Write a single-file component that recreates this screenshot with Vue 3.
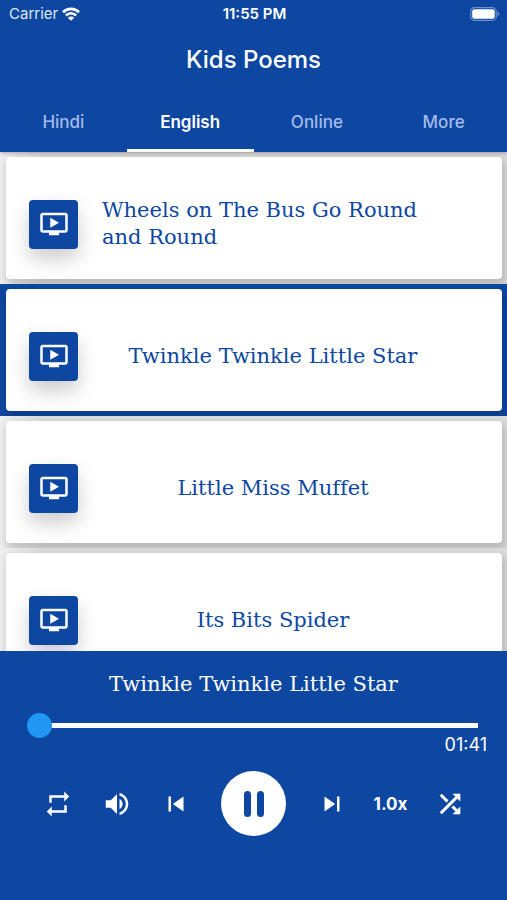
<script setup>
import { ref } from 'vue'

const tabs = ['Hindi', 'English', 'Online', 'More']
const activeTab = ref('English')

const poems = [
  'Wheels on The Bus Go Round and Round',
  'Twinkle Twinkle Little Star',
  'Little Miss Muffet',
  'Its Bits Spider',
]
const current = ref('Twinkle Twinkle Little Star')
const position = ref(0)
</script>

<template>
  <div class="app">
    <header class="header">
      <div class="status">
        <div class="carrier">
          <span>Carrier</span>
          <svg class="wifi" viewBox="0 0 18 14" aria-hidden="true">
            <g fill="none" stroke="currentColor" stroke-width="2.700">
              <path d="M1 5.200C5.500.7 12.500.7 17 5.200" />
              <path d="M3.900 8.500C6.900 5.500 11.100 5.500 14.100 8.500" />
            </g>
            <path d="M9 13.800 5.800 10.700C7.600 9.100 10.400 9.100 12.200 10.700Z" fill="currentColor" />
          </svg>
        </div>
        <span class="clock">11:55 PM</span>
        <svg class="battery" viewBox="0 0 30 14" aria-hidden="true">
          <rect x="0.700" y="0.700" width="25.600" height="12.600" rx="3.800" fill="none" stroke="#6e8fc8" stroke-width="1.200" />
          <rect x="2.200" y="2.200" width="22.600" height="9.600" rx="2.300" fill="#fff" />
          <path d="M27.600 4.800C29.800 5.500 29.800 8.500 27.600 9.200Z" fill="#6e8fc8" />
        </svg>
      </div>
      <h1 class="title">Kids Poems</h1>
      <nav class="tabs">
        <button
          v-for="tab in tabs"
          :key="tab"
          type="button"
          class="tab"
          :class="{ active: tab === activeTab }"
          @click="activeTab = tab"
        >{{ tab }}</button>
      </nav>
    </header>

    <main class="list">
      <div v-for="poem in poems" :key="poem" class="row" :class="{ selected: poem === current }">
        <button type="button" class="card" @click="current = poem">
          <span class="tile">
            <svg viewBox="0 0 24 24" aria-hidden="true">
              <path d="M21 3H3c-1.110 0-2 .89-2 2v12c0 1.100.89 2 2 2h5v2h8v-2h5c1.100 0 1.990-.9 1.990-2L23 5c0-1.100-.9-2-2-2zm0 14H3V5h18v12zm-5-6l-7 4V7z" />
            </svg>
          </span>
          <span class="name">{{ poem }}</span>
        </button>
      </div>
    </main>

    <footer class="player">
      <h2 class="playing">{{ current }}</h2>
      <input v-model="position" class="seek" type="range" min="0" max="101" aria-label="Position" />
      <div class="time">01:41</div>
      <div class="controls">
        <button type="button" class="control" aria-label="Repeat">
          <svg viewBox="0 0 24 24"><path d="M7 7h10v3l4-4-4-4v3H5v6h2V7zm10 10H7v-3l-4 4 4 4v-3h12v-6h-2v4z" /></svg>
        </button>
        <button type="button" class="control" aria-label="Volume">
          <svg viewBox="0 0 24 24"><path d="M3 9v6h4l5 5V4L7 9H3zm13.500 3c0-1.770-1.020-3.290-2.500-4.030v8.050c1.480-.73 2.500-2.250 2.500-4.020zM14 3.230v2.060c2.890.86 5 3.540 5 6.710s-2.110 5.850-5 6.710v2.060c4.010-.91 7-4.490 7-8.770s-2.990-7.860-7-8.770z" /></svg>
        </button>
        <button type="button" class="control" aria-label="Previous">
          <svg viewBox="0 0 24 24"><path d="M6 6h2v12H6zm3.500 6l8.500 6V6z" /></svg>
        </button>
        <button type="button" class="pause" aria-label="Pause">
          <svg viewBox="0 0 20 26"><rect width="7" height="26" rx="3.500" /><rect x="13" width="7" height="26" rx="3.500" /></svg>
        </button>
        <button type="button" class="control" aria-label="Next">
          <svg viewBox="0 0 24 24"><path d="M6 18l8.500-6L6 6v12zM16 6v12h2V6h-2z" /></svg>
        </button>
        <button type="button" class="control speed">1.0x</button>
        <button type="button" class="control" aria-label="Shuffle">
          <svg viewBox="0 0 24 24"><path stroke="#fff" stroke-width="0.500" d="M10.590 9.170L5.410 4 4 5.410l5.170 5.170 1.420-1.410zM14.500 4l2.040 2.040L4 18.590 5.410 20 17.960 7.460 20 9.500V4h-5.500zm.33 9.410l-1.410 1.410 3.130 3.130L14.500 20H20v-5.500l-2.040 2.040-3.130-3.130z" /></svg>
        </button>
      </div>
    </footer>
  </div>
</template>

<style>
body {
  margin: 0;
}
</style>

<style scoped>
.app {
  display: flex;
  flex-direction: column;
  height: 100vh;
  color: #fff;
  background: #fafafa;
  font-family: Inter, "Liberation Sans", sans-serif;
}

button {
  margin: 0;
  padding: 0;
  border: 0;
  background: none;
  color: inherit;
  font: inherit;
  cursor: pointer;
}

.header {
  position: relative;
  z-index: 1;
  background: #0d47a1;
  box-shadow: 0 1px 4px rgba(0, 0, 0, 0.3);
}

.status {
  display: grid;
  grid-template-columns: 1fr auto 1fr;
  align-items: center;
  height: 27px;
  padding: 0 7px 0 9px;
  font-size: 15px;
}

.carrier {
  display: flex;
  align-items: center;
  gap: 4px;
  color: #dfe8f7;
}

.wifi {
  width: 18px;
  height: 14px;
  color: #fff;
}

.clock {
  font-weight: 600;
}

.battery {
  justify-self: end;
  width: 30px;
  height: 14px;
}

.title {
  margin: 0;
  font-size: 24px;
  font-weight: 500;
  line-height: 65px;
  text-align: center;
}

.tabs {
  display: flex;
  height: 60px;
}

.tab {
  flex: 1;
  padding-top: 3px;
  border-bottom: 3px solid transparent;
  color: #a3baea;
  font-size: 17px;
  font-weight: 500;
}

.tab.active {
  border-bottom-color: #fff;
  color: #fff;
  font-weight: 600;
}

.list {
  flex: 1;
  min-height: 0;
  overflow-y: auto;
  scrollbar-width: none;
}

.row {
  position: relative;
  padding: 5px 5px 5px 6px;
  overflow: hidden;
  background: linear-gradient(to right, #f0f0f0, #dcdcdc 40px);
}

.row.selected {
  background: #0d47a1;
}

.card {
  display: flex;
  align-items: center;
  gap: 24px;
  width: 100%;
  height: 122px;
  padding: 12px 58px 0 23px;
  border-radius: 4px;
  background: #fff;
  box-shadow: 2px 5px 10px 2px rgba(0, 0, 0, 0.16);
}

.tile {
  display: flex;
  flex: none;
  align-items: center;
  justify-content: center;
  width: 49px;
  height: 49px;
  border-radius: 4px;
  background: #0d47a1;
  box-shadow: 0 10px 20px rgba(0, 0, 0, 0.2);
}

.tile svg {
  width: 30px;
  height: 30px;
  fill: #fff;
}

.name,
.playing {
  font-family: "DejaVu Serif", serif;
  font-size: 21px;
  font-weight: 400;
  line-height: 27px;
  font-variant-ligatures: none;
}

.name {
  flex: 1;
  color: #0d47a1;
  text-align: center;
}

.row:first-child .name {
  text-align: left;
}

.player {
  position: relative;
  height: 249px;
  background: #0d47a1;
}

.playing {
  margin: 0;
  padding: 20px 0 15px;
  text-align: center;
}

.seek {
  display: block;
  width: calc(100% - 56px);
  height: 25px;
  margin: 0 29px 0 27px;
  appearance: none;
  background: none;
}

.seek::-webkit-slider-runnable-track {
  height: 5px;
  background: linear-gradient(to right, transparent 12px, #fff 12px);
}

.seek::-webkit-slider-thumb {
  width: 25px;
  height: 25px;
  margin-top: -10px;
  border-radius: 50%;
  appearance: none;
  background: #2196f3;
}

.time {
  padding-right: 20px;
  font-size: 18px;
  line-height: 13px;
  text-align: right;
}

.controls {
  display: flex;
  align-items: center;
  padding: 20px 28px 0;
}

.control {
  display: flex;
  flex: 1 1 0;
  align-items: center;
  justify-content: center;
  height: 48px;
}

.control svg {
  width: 30px;
  height: 30px;
  fill: #fff;
}

.speed {
  font-size: 17px;
  font-weight: 700;
}

.pause {
  display: flex;
  align-items: center;
  justify-content: center;
  width: 65px;
  height: 65px;
  margin: 0 16px;
  border-radius: 50%;
  background: #fff;
}

.pause svg {
  width: 20px;
  height: 26px;
  fill: #0d47a1;
}
</style>
